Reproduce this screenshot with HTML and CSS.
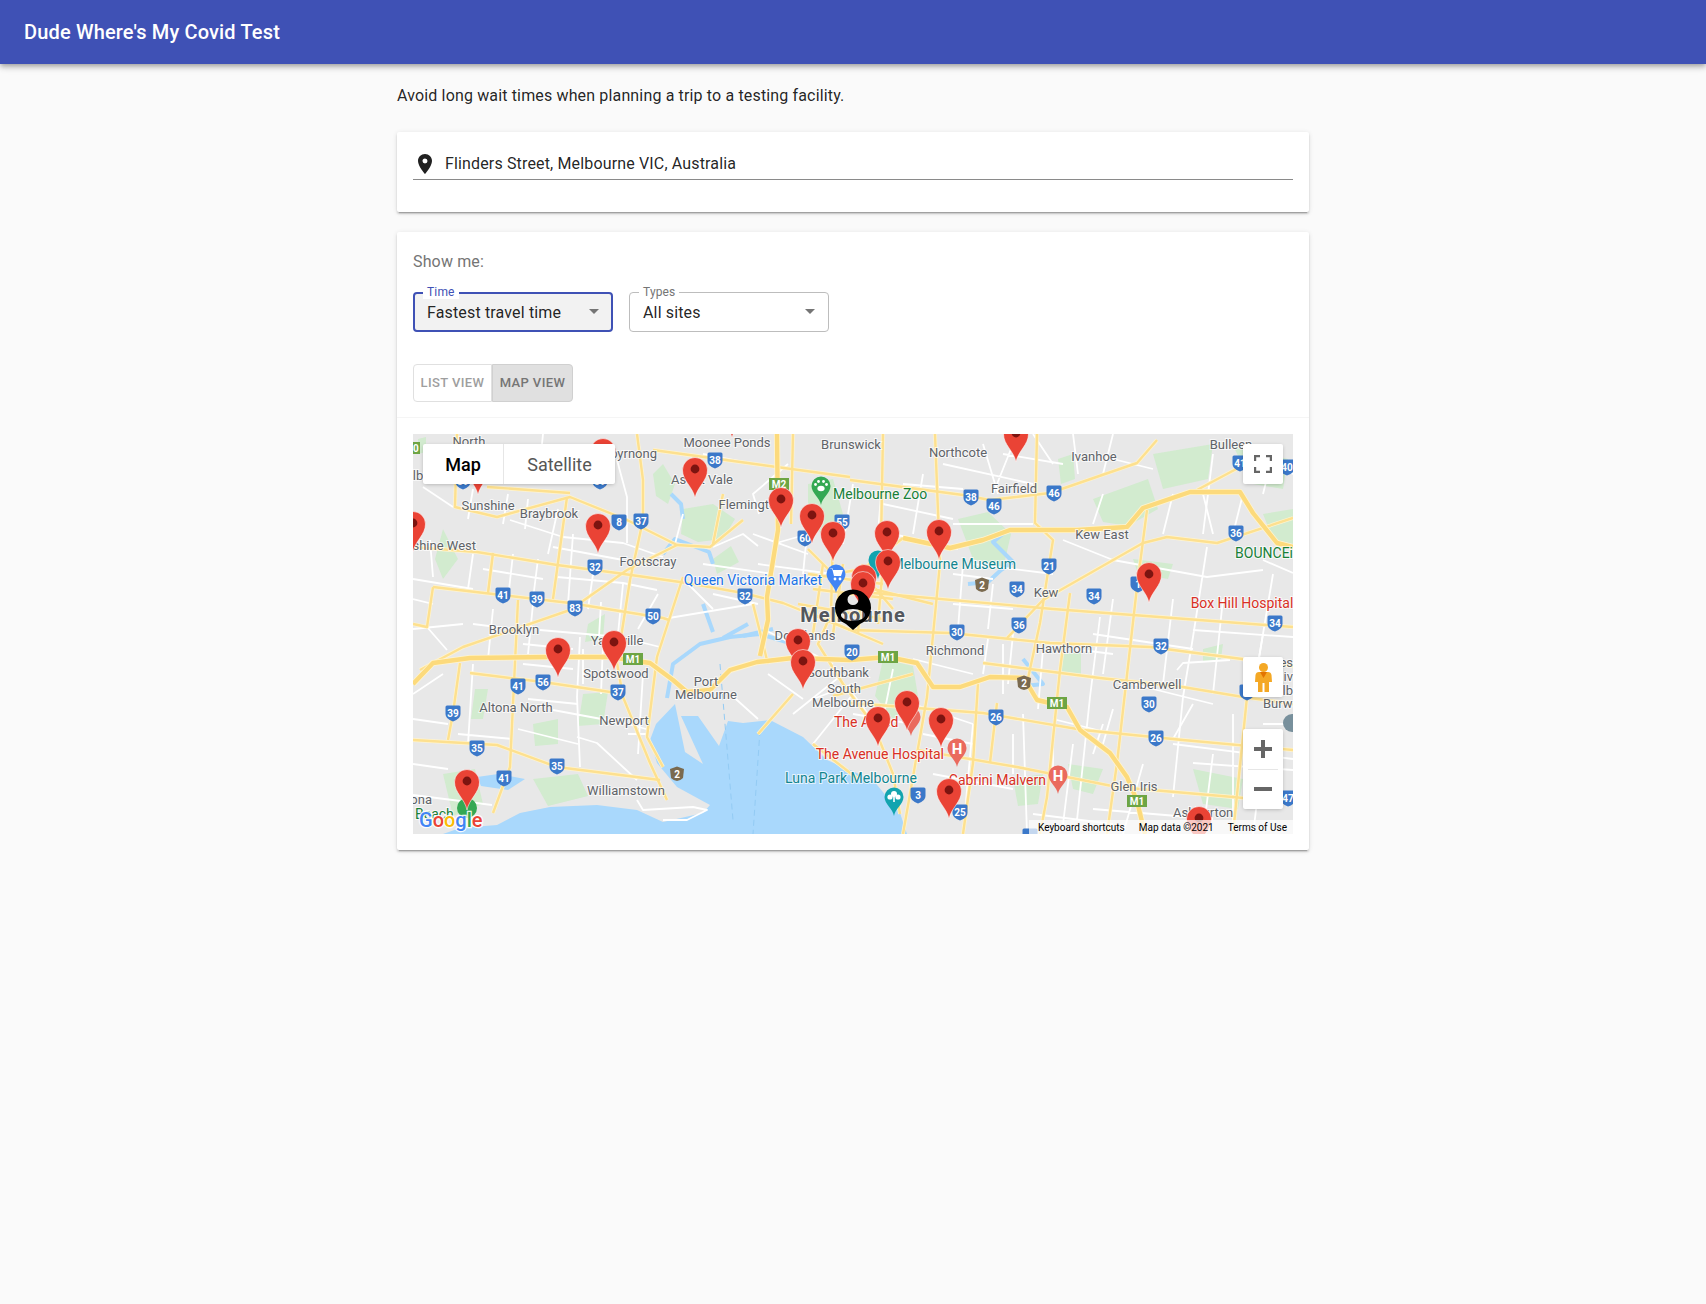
FILE: index.html
```html
<!DOCTYPE html>
<html lang="en">
<head>
  <meta charset="UTF-8" />
  <title>Dude Where's My Covid Test</title>
  <meta name="viewport" content="width=device-width, initial-scale=1.0" />
  <link rel="stylesheet" href="styles.css">
</head>
<body>
  <header class="appbar">
    <h1>Dude Where's My Covid Test</h1>
  </header>

  <main class="container">
    <p class="intro">Avoid long wait times when planning a trip to a testing facility.</p>

    <section class="paper search">
      <div class="search-field">
        <svg class="search-icon" viewBox="0 0 24 24" width="24" height="24"><path d="M12 2C8.13 2 5 5.13 5 9c0 5.25 7 13 7 13s7-7.75 7-13c0-3.87-3.13-7-7-7zm0 9.5a2.5 2.5 0 0 1 0-5 2.5 2.5 0 0 1 0 5z"/></svg>
        <input type="text" value="Flinders Street, Melbourne VIC, Australia">
      </div>
    </section>

    <section class="paper results">
      <div class="filters">
        <div class="show-me">Show me:</div>
        <div class="selects">
          <div class="select focused">
            <span class="select-label">Time</span>
            <span class="select-value">Fastest travel time</span>
            <span class="select-arrow"></span>
          </div>
          <div class="select">
            <span class="select-label">Types</span>
            <span class="select-value">All sites</span>
            <span class="select-arrow"></span>
          </div>
        </div>
        <div class="toggle">
          <button>List view</button>
          <button class="on">Map view</button>
        </div>
      </div>

      <div class="map-wrap">
        <div class="map">
          <svg class="map-canvas" viewBox="0 0 880 400" width="880" height="400">
            <defs>
              <path id="shield" d="M-7.5 -6Q-7.5 -7.5 -6 -7.5H6Q7.5 -7.5 7.5 -6V1Q7.5 6 0 8.5Q-7.5 6 -7.5 1Z"/>
              <path id="brown" d="M-7 -5L0 -7.5L7 -5L6 4Q3 7 0 7Q-3 7 -6 4Z"/>
              <path id="marker" d="M0 0C-1 -7 -9.5 -12 -9.5 -19A9.5 9.5 0 1 1 9.5 -19C9.5 -12 1 -7 0 0Z"/>
              <g id="pin">
                <path class="pin-body" d="M0 0C-2 -11 -12.5 -17 -12.5 -28A12.5 12.5 0 1 1 12.5 -28C12.5 -17 2 -11 0 0Z"/>
                <circle class="pin-dot" cx="0" cy="-29" r="4.4"/>
              </g>
              <g id="mains">
                <path d="M0 113L64 118L144 131L204 139L274 149L330 159L370 169L437 196L537 199L637 209L737 213L837 226L880 232"/>
                <path d="M20 153L157 169L250 184L256 186"/>
                <path d="M437 159L460 159L640 175L880 193"/>
                <path d="M570 229L687 244L770 253L830 263L880 270"/>
                <path d="M437 269L570 279L670 296L770 306L880 316"/>
                <path d="M504 316L604 333L704 353L820 363L880 369"/>
                <path d="M594 204L630 166L730 109L754 103L804 109L880 84"/>
                <path d="M522 0L527 129L514 263L490 400"/>
                <path d="M624 0L622 89L640 106L627 189L614 249"/>
                <path d="M657 159L647 236L634 363L627 400"/>
                <path d="M734 76L724 153L704 329L694 400"/>
                <path d="M834 263L820 400"/>
                <path d="M744 6L724 29L637 59L577 66L550 61L437 46"/>
                <path d="M827 33L784 56"/>
                <path d="M44 0L42 73L84 83L157 63L214 86L264 111L297 113L330 86"/>
                <path d="M224 0L230 46L230 86L217 146L204 229L210 263L237 329L254 366"/>
                <path d="M154 63L144 136L140 165"/>
                <path d="M105 166L97 333L80 379"/>
                <path d="M80 119L75 159"/>
                <path d="M7 236L50 213L157 176L214 136L264 111"/>
                <path d="M0 306L84 311L144 333L247 346"/>
                <path d="M57 239L130 248L204 259"/>
                <path d="M47 229L40 279L35 306"/>
                <path d="M270 143L244 223L234 303L250 333"/>
                <path d="M240 16L437 43"/>
                <path d="M74 53L157 59"/>
                <path d="M20 153L14 193L0 190"/>
                <path d="M380 0L378 90M420 100L418 180L405 210L430 250L460 290L480 340L487 380"/>
                <path d="M395 115L420 140L450 135L490 104M380 260L345 300"/>
                <path d="M440 150L520 170M450 140L480 175M400 180L470 210M470 0L468 110M565 249L560 329L550 400M584 269L577 329"/>
                <path d="M395 140L470 150M400 155L480 165M385 170L470 185M410 130L400 200M430 130L420 200M450 130L445 200M470 130L465 190"/>
                <path d="M420 262L500 240M400 310L445 345M340 170L355 230M310 60L300 110"/>
              </g>
            </defs>

            <!-- land cover -->
            <rect class="land" width="880" height="400"/>
            <g class="park">
              <path d="M270 75L300 70L322 85L310 105L285 108L268 100Z"/>
              <path d="M250 30L262 50L255 70L243 62L240 40Z"/>
              <path d="M395 50L420 45L430 80L410 100L395 90Z"/>
              <path d="M300 125L318 112L326 128L304 140Z"/>
              <path d="M470 225L500 232L505 262L480 285L462 262Z"/>
              <path d="M545 85L575 78L598 100L590 135L560 125Z"/>
              <path d="M645 25L660 20L662 45L648 50Z"/>
              <path d="M680 65L735 45L745 75L715 92L690 88Z"/>
              <path d="M740 20L800 10L795 45L750 55Z"/>
              <path d="M820 12L875 25L870 55L840 50Z"/>
              <path d="M850 80L880 75L880 110L860 105Z"/>
              <path d="M170 260L195 258L190 290L165 292Z"/>
              <path d="M120 290L145 285L145 310L122 312Z"/>
              <path d="M120 345L165 340L175 362L135 372Z"/>
              <path d="M30 95L45 125L30 145L22 125Z"/>
              <path d="M62 255L75 255L70 285L58 285Z"/>
              <path d="M175 190L192 180L190 205L172 208Z"/>
              <path d="M30 340L62 335L70 370L40 382Z"/>
              <path d="M650 220L668 218L668 240L648 238Z"/>
              <path d="M720 125L760 130L755 145L725 140Z"/>
              <path d="M655 330L690 335L680 360L660 355Z"/>
              <path d="M600 345L630 340L625 370L605 372Z"/>
              <path d="M780 335L830 345L825 375L790 370Z"/>
              <path d="M790 215L810 210L808 225L790 228Z"/>
              <path d="M5 5L13 3L13 18L5 20Z"/>
            </g>

            <!-- water -->
            <path class="water" d="M494 400L487 379L474 363L460 346L437 336L414 326L390 303L357 286L330 289L315 287L306 312L285 282L268 282L290 330L272 318L262 270L243 290L237 306L244 329L264 353L297 371L290 379L250 388L224 376L184 371L137 373L107 379L84 391L47 394L30 400Z"/>
            <path class="water" d="M64 343L85 340L112 345L95 356L68 352Z"/>
            <g class="river">
              <path d="M254 264L260 230L287 210L317 203L347 200L380 210L398 206"/>
              <path d="M290 170L300 198"/>
              <path d="M335 190L310 204"/>
              <path d="M360 195L330 202"/>
              <path d="M250 120L262 105L296 118L300 130"/>
              <path d="M258 60L268 70L270 85"/>
              <path d="M555 150L575 148L588 136L600 128L580 108L592 98"/>
              <path d="M610 225L630 250L612 252"/>
            </g>
            <path class="ferry" d="M347 296L340 400M307 230L320 386"/>

            <!-- minor roads -->
            <path class="road-minor" d="M10 53L40 73M97 86L150 103L210 109L250 123M144 143L210 149L244 156M140 113L210 126M127 196L207 203L247 213M167 203L164 263L167 333M140 276L210 289L237 296M164 303L184 309L224 346M17 106L20 143M14 193L34 216M224 366L230 376L280 373L294 376L274 386L250 386M0 361L79 371M204 26L214 63L214 109M794 113L780 203L770 263L760 363M850 126L880 139M650 106L700 126L794 143L850 136M780 196L880 203M764 236L770 229L817 226M687 183L677 263L664 386M614 400L610 280M780 329L880 336M270 80L262 110M300 113L330 100L345 112M346 80L340 60L375 30M130 0L125 50M60 55L55 85M95 60L90 90M115 65L112 95M145 75L135 120M60 120L55 155M0 195L50 190M0 260L30 240M188 168L186 203M210 150L205 200M245 160L225 195M380 280L430 240M400 310L440 260L470 300M440 280L500 290M500 225L560 240M540 140L580 145M540 170L600 175M590 210L590 260M680 200L780 215M640 290L640 350M690 290L680 320M840 20L880 40M800 20L790 100M700 25L740 35M620 0L640 30M570 10L585 60M510 40L500 100M470 35L465 100M440 50L430 110M395 90L390 140M340 100L395 120M345 130L420 140M560 290L550 400M520 340L600 355M620 380L700 390M720 250L800 270M820 280L820 400M850 290L880 290M860 140L840 260M600 300L600 340"/>
            <path class="road-minor" d="M0 145L60 155M0 165L20 170M60 190L100 195M0 285L35 290M0 330L35 335M45 300L100 305M110 210L160 215M110 230L160 235M115 265L165 270M105 295L165 310M170 215L170 250M190 210L188 260M230 240L225 320M215 300L235 300M120 170L115 220M80 175L75 225M60 230L55 310M70 135L130 145M100 120L95 165M125 125L120 165M160 100L155 170M180 140L175 175M275 150L300 175M300 160L345 170M250 185L340 170M315 258L345 285M355 240L390 265M400 265L440 250M480 235L470 285M500 270L560 290M510 300L560 310M550 130L545 195M580 150L575 195M575 205L570 240M600 200L595 250M630 215L625 275M660 215L700 220M700 165L690 240M640 285L700 300M700 275L690 310M760 165L750 250M810 165L800 260M850 200L840 260M780 270L760 305M660 310L650 390M730 330L710 400M680 375L800 385M760 310L880 325M800 320L790 400M850 320L840 400M690 60L680 90M760 60L750 100M790 60L800 100M830 60L820 100M860 20L850 60M700 0L690 40M660 0L665 40M590 20L650 30M530 30L620 50M490 50L550 55M470 70L540 85M540 90L620 90M480 100L545 115M560 130L640 140M600 10L580 60M360 110L395 100M290 20L340 30M290 130L360 140M350 195L420 230"/>

            <!-- main roads -->
            <use class="road-casing" href="#mains"/>
            <use class="road-main" href="#mains"/>
            <path class="freeway-casing" d="M0 250L20 229L57 224L137 223L197 223L237 229L260 246L274 258L297 256L317 236L344 228L380 224L437 226L475 223L504 229L520 253L547 253L577 243L611 244L624 266L654 273L667 296L697 319L714 343L724 367L732 400M364 0L365 96L354 163L355 186L347 222M490 104L537 114L570 106L597 96L664 96L714 93L730 74L777 58L827 58L840 79L864 109L880 113"/>
            <path class="road-freeway" d="M0 250L20 229L57 224L137 223L197 223L237 229L260 246L274 258L297 256L317 236L344 228L380 224L437 226L475 223L504 229L520 253L547 253L577 243L611 244L624 266L654 273L667 296L697 319L714 343L724 367L732 400M364 0L365 96L354 163L355 186L347 222M490 104L537 114L570 106L597 96L664 96L714 93L730 74L777 58L827 58L840 79L864 109L880 113"/>

            <!-- place names -->
            <g class="labels">
              <text x="56" y="12">North</text>
              <text x="5" y="46">lb</text>
              <text x="244" y="24" text-anchor="end">Maribyrnong</text>
              <text x="314" y="13">Moonee Ponds</text>
              <text x="438" y="15">Brunswick</text>
              <text x="289" y="50">Ascot Vale</text>
              <text x="75" y="76">Sunshine</text>
              <text x="136" y="84">Braybrook</text>
              <text x="338" y="75">Flemington</text>
              <text x="63" y="116" text-anchor="end">Sunshine West</text>
              <text x="235" y="132">Footscray</text>
              <text x="101" y="200">Brooklyn</text>
              <text x="204" y="211">Yarraville</text>
              <text x="392" y="206">Docklands</text>
              <text x="425" y="243">Southbank</text>
              <text x="431" y="259">South</text>
              <text x="430" y="273">Melbourne</text>
              <text x="203" y="244">Spotswood</text>
              <text x="293" y="252">Port</text>
              <text x="293" y="265">Melbourne</text>
              <text x="103" y="278">Altona North</text>
              <text x="211" y="291">Newport</text>
              <text x="213" y="361">Williamstown</text>
              <text x="19" y="370" text-anchor="end">Altona</text>
              <text x="545" y="23">Northcote</text>
              <text x="681" y="27">Ivanhoe</text>
              <text x="818" y="15">Bulleen</text>
              <text x="601" y="59">Fairfield</text>
              <text x="689" y="105">Kew East</text>
              <text x="633" y="163">Kew</text>
              <text x="542" y="221">Richmond</text>
              <text x="651" y="219">Hawthorn</text>
              <text x="734" y="255">Camberwell</text>
              <text x="850" y="274" text-anchor="start">Burwood</text>
              <text x="721" y="357">Glen Iris</text>
              <text x="760" y="383" text-anchor="start">Ashburton</text>
              <text x="880" y="233" text-anchor="end">es</text>
              <text x="880" y="247" text-anchor="end">iv</text>
              <text x="880" y="261" text-anchor="end">lb</text>
              <text class="city" x="440" y="188">Melbourne</text>
              <text class="blue" x="340" y="151">Queen Victoria Market</text>
              <text class="green" x="420" y="65" text-anchor="start">Melbourne Zoo</text>
              <text class="green" x="880" y="124" text-anchor="end">BOUNCEi</text>
              <text class="green" x="2" y="385" text-anchor="start">Beach</text>
              <text class="teal" x="603" y="135" text-anchor="end">Melbourne Museum</text>
              <text class="teal" x="504" y="349" text-anchor="end">Luna Park Melbourne</text>
              <text class="red" x="829" y="174">Box Hill Hospital</text>
              <text class="red" x="421" y="293" text-anchor="start">The Alfred</text>
              <text class="red" x="531" y="325" text-anchor="end">The Avenue Hospital</text>
              <text class="red" x="633" y="351" text-anchor="end">Cabrini Malvern</text>
            </g>

            <!-- route shields -->
            <g class="shields">
              <use href="#shield" x="302" y="26"/><text x="302" y="29.5">38</text>
              <use href="#shield" x="392" y="104"/><text x="392" y="107.5">60</text>
              <use href="#shield" x="429" y="88"/><text x="429" y="91.5">55</text>
              <use href="#shield" x="206" y="88"/><text x="206" y="91.5">8</text>
              <use href="#shield" x="228" y="87"/><text x="228" y="90.5">37</text>
              <use href="#shield" x="182" y="133"/><text x="182" y="136.5">32</text>
              <use href="#shield" x="332" y="162"/><text x="332" y="165.5">32</text>
              <use href="#shield" x="90" y="161"/><text x="90" y="164.5">41</text>
              <use href="#shield" x="124" y="165"/><text x="124" y="168.5">39</text>
              <use href="#shield" x="162" y="174"/><text x="162" y="177.5">83</text>
              <use href="#shield" x="240" y="182"/><text x="240" y="185.5">50</text>
              <use href="#shield" x="130" y="248"/><text x="130" y="251.5">56</text>
              <use href="#shield" x="105" y="252"/><text x="105" y="255.5">41</text>
              <use href="#shield" x="205" y="258"/><text x="205" y="261.5">37</text>
              <use href="#shield" x="40" y="279"/><text x="40" y="282.5">39</text>
              <use href="#shield" x="64" y="314"/><text x="64" y="317.5">35</text>
              <use href="#shield" x="144" y="332"/><text x="144" y="335.5">35</text>
              <use href="#shield" x="91" y="344"/><text x="91" y="347.5">41</text>
              <use href="#shield" x="187" y="47"/><text x="187" y="50.5">39</text>
              <use href="#shield" x="50" y="47"/><text x="50" y="50.5">39</text>
              <use href="#shield" x="558" y="63"/><text x="558" y="66.5">38</text>
              <use href="#shield" x="581" y="72"/><text x="581" y="75.5">46</text>
              <use href="#shield" x="641" y="59"/><text x="641" y="62.5">46</text>
              <use href="#shield" x="827" y="29"/><text x="827" y="32.5">41</text>
              <use href="#shield" x="874" y="33"/><text x="874" y="36.5">40</text>
              <use href="#shield" x="823" y="99"/><text x="823" y="102.5">36</text>
              <use href="#shield" x="636" y="132"/><text x="636" y="135.5">21</text>
              <use href="#shield" x="604" y="155"/><text x="604" y="158.5">34</text>
              <use href="#shield" x="681" y="162"/><text x="681" y="165.5">34</text>
              <use href="#shield" x="862" y="189"/><text x="862" y="192.5">34</text>
              <use href="#shield" x="606" y="191"/><text x="606" y="194.5">36</text>
              <use href="#shield" x="544" y="198"/><text x="544" y="201.5">30</text>
              <use href="#shield" x="748" y="212"/><text x="748" y="215.5">32</text>
              <use href="#shield" x="439" y="218"/><text x="439" y="221.5">20</text>
              <use href="#shield" x="736" y="270"/><text x="736" y="273.5">30</text>
              <use href="#shield" x="583" y="283"/><text x="583" y="286.5">26</text>
              <use href="#shield" x="743" y="304"/><text x="743" y="307.5">26</text>
              <use href="#shield" x="505" y="361"/><text x="505" y="364.5">3</text>
              <use href="#shield" x="547" y="378"/><text x="547" y="381.5">25</text>
              <use href="#shield" x="875" y="364"/><text x="875" y="367.5">47</text>
              <use href="#shield" x="725" y="150"/><text x="725" y="153.5">1</text>
              <use href="#shield" x="834" y="258"/>
              <use href="#shield" x="617" y="402"/>
            </g>
            <g class="motorways">
              <rect x="-6" y="8" width="13" height="12"/><text x="0" y="17.5">40</text>
              <rect x="356" y="44" width="20" height="12"/><text x="366" y="53.5">M2</text>
              <rect x="210" y="219" width="20" height="12"/><text x="220" y="228.5">M1</text>
              <rect x="465" y="217" width="20" height="12"/><text x="475" y="226.5">M1</text>
              <rect x="634" y="263" width="20" height="12"/><text x="644" y="272.5">M1</text>
              <rect x="714" y="361" width="20" height="12"/><text x="724" y="370.5">M1</text>
            </g>
            <g class="brown-shields">
              <use href="#brown" x="264" y="340"/><text x="264" y="343.5">2</text>
              <use href="#brown" x="569" y="151"/><text x="569" y="154.5">2</text>
              <use href="#brown" x="611" y="249"/><text x="611" y="252.5">2</text>
            </g>

            <!-- poi markers -->
            <use class="mk-hospital" href="#marker" x="544" y="333"/><text class="mk-h" x="544" y="319.5">H</text>
            <use class="mk-hospital" href="#marker" x="645" y="360"/><text class="mk-h" x="645" y="346.5">H</text>
            <use class="mk-hospital" href="#marker" x="498" y="302"/>
            <use class="mk-teal" href="#marker" x="481" y="382"/>
            <g class="mk-hole">
              <circle cx="481" cy="360" r="3"/><circle cx="477" cy="363" r="2.6"/><circle cx="485" cy="363" r="2.6"/><rect x="480.2" y="362" width="1.6" height="6"/>
            </g>
            <use class="mk-teal" href="#marker" x="465" y="145"/>
            <use class="mk-green" href="#marker" x="408" y="71"/>
            <g class="mk-hole">
              <ellipse cx="408" cy="54.5" rx="3.6" ry="2.8"/><circle cx="402.5" cy="50.5" r="1.4"/><circle cx="405.5" cy="47.5" r="1.4"/><circle cx="410.5" cy="47.5" r="1.4"/><circle cx="413.5" cy="50.5" r="1.4"/>
            </g>
            <use class="mk-blue" href="#marker" x="423" y="159"/>
            <g class="mk-hole">
              <path d="M416 134H419L421 142H428L430 136H420V134.5Z"/><circle cx="422" cy="145" r="1.4"/><circle cx="427" cy="145" r="1.4"/>
            </g>
            <circle class="mk-green-dot" cx="54" cy="374" r="10"/>
            <circle class="mk-grey" cx="879" cy="289" r="9"/>

            <!-- test sites -->
            <use href="#pin" x="319" y="4"/>
            <use href="#pin" x="65" y="61"/>
            <use href="#pin" x="190" y="45"/>
            <use href="#pin" x="603" y="28"/>
            <use href="#pin" x="282" y="64"/>
            <use href="#pin" x="368" y="94"/>
            <use href="#pin" x="399" y="110"/>
            <use href="#pin" x="420" y="128"/>
            <use href="#pin" x="185" y="120"/>
            <use href="#pin" x="0" y="118"/>
            <use href="#pin" x="474" y="127"/>
            <use href="#pin" x="526" y="126"/>
            <use href="#pin" x="451" y="171"/>
            <use href="#pin" x="475" y="156"/>
            <use href="#pin" x="450" y="178"/>
            <use href="#pin" x="736" y="169"/>
            <use href="#pin" x="201" y="237"/>
            <use href="#pin" x="145" y="244"/>
            <use href="#pin" x="385" y="235"/>
            <use href="#pin" x="390" y="256"/>
            <use href="#pin" x="494" y="297"/>
            <use href="#pin" x="465" y="313"/>
            <use href="#pin" x="528" y="314"/>
            <use href="#pin" x="536" y="385"/>
            <use href="#pin" x="54" y="376"/>
            <use href="#pin" x="786" y="413"/>

            <!-- you are here, the holes show the map through -->
            <path class="me" fill-rule="evenodd" d="M440 196L433 190A18 18 0 1 1 447 190ZM440 160A5.5 5.5 0 1 0 440 171A5.5 5.5 0 1 0 440 160ZM428 181A12 6 0 0 0 452 181A12 6 0 0 0 428 181Z"/>

            <text class="google" x="6" y="393"><tspan class="g-blue">G</tspan><tspan class="g-red">o</tspan><tspan class="g-yellow">o</tspan><tspan class="g-blue">g</tspan><tspan class="g-green">l</tspan><tspan class="g-red">e</tspan></text>
          </svg>

          <div class="map-type">
            <span class="active">Map</span>
            <span>Satellite</span>
          </div>
          <div class="map-btn fullscreen">
            <svg viewBox="0 0 18 18" width="18" height="18"><path d="M1 6V1H6M12 1H17V6M17 12V17H12M6 17H1V12"/></svg>
          </div>
          <div class="map-btn pegman">
            <svg viewBox="0 0 17 29" width="17" height="29">
              <circle cx="8.5" cy="4.5" r="4.5" fill="#f4a825"/>
              <path d="M4 9H13Q16 9 16.5 12L17 19H14V29H9.5V20H7.5V29H3V19H0L.5 12Q1 9 4 9Z" fill="#f4a825"/>
              <path d="M5 9L8.5 15L12 9Z" fill="#e37400"/>
            </svg>
          </div>
          <div class="zoom-btns">
            <svg viewBox="0 0 40 40" width="40" height="40"><path d="M20 11V29M11 20H29"/></svg>
            <svg viewBox="0 0 40 40" width="40" height="40"><path d="M11 20H29"/></svg>
          </div>
          <div class="attribution">
            <span>Keyboard shortcuts</span>
            <span>Map data ©2021</span>
            <span>Terms of Use</span>
          </div>
        </div>
      </div>
    </section>
  </main>
</body>
</html>
```

FILE: styles.css
```css
* {
  box-sizing: border-box;
}

html, body {
  margin: 0;
  padding: 0;
}

body {
  font-family: Roboto, 'Liberation Sans', sans-serif;
  background: #fafafa;
  color: rgba(0,0,0,0.87);
  min-height: 1304px;
}

.appbar {
  height: 64px;
  padding: 0 24px;
  display: flex;
  align-items: center;
  background: #3f51b5;
  color: white;
  box-shadow: 0 2px 4px -1px rgba(0,0,0,0.2), 0 4px 5px 0 rgba(0,0,0,0.14), 0 1px 10px 0 rgba(0,0,0,0.12);
}

.appbar h1 {
  margin: 0;
  font-size: 20px;
  font-weight: 500;
  letter-spacing: 0.15px;
}

.container {
  width: 960px;
  margin: 0 auto;
  padding: 0 24px;
}

.intro {
  margin: 0;
  padding-top: 21px;
  height: 68px;
  font-size: 16px;
  line-height: 22px;
  letter-spacing: 0.15px;
}

.paper {
  background: white;
  border-radius: 2px;
  box-shadow: 0 3px 1px -2px rgba(0,0,0,0.2), 0 2px 2px 0 rgba(0,0,0,0.14), 0 1px 5px 0 rgba(0,0,0,0.12);
}

.search {
  height: 80px;
  padding: 16px;
}

.search-field {
  height: 32px;
  display: flex;
  align-items: center;
  border-bottom: 1px solid #8a8a8a;
}

.search-icon {
  flex: none;
  width: 24px;
  height: 24px;
  fill: #212121;
}

.search-field input {
  flex: 1;
  margin-left: 8px;
  border: none;
  outline: none;
  background: none;
  padding: 0;
  font-family: inherit;
  font-size: 16px;
  letter-spacing: 0.15px;
  color: rgba(0,0,0,0.87);
}

.results {
  margin-top: 20px;
  height: 618px;
}

.filters {
  height: 186px;
  padding: 19px 16px 0;
  border-bottom: 1px solid #f5f5f5;
}

.show-me {
  font-size: 16px;
  line-height: 22px;
  letter-spacing: 0.15px;
  color: #757575;
}

.selects {
  display: flex;
  gap: 16px;
  margin-top: 19px;
}

.select {
  position: relative;
  width: 200px;
  height: 40px;
  border: 1px solid #bdbdbd;
  border-radius: 4px;
  display: flex;
  align-items: center;
  padding: 0 13px;
  font-size: 16px;
  letter-spacing: 0.15px;
}

.select.focused {
  border: 2px solid #3f51b5;
  background: #f2f2f2;
  padding: 0 12px;
}

.select-label {
  position: absolute;
  top: -7px;
  left: 9px;
  padding: 0 4px;
  background: white;
  font-size: 12px;
  line-height: 13px;
  color: #757575;
}

.focused .select-label {
  top: -8px;
  left: 8px;
  color: #3f51b5;
}

.select-arrow {
  position: absolute;
  right: 13px;
  top: 16px;
  border-left: 5px solid transparent;
  border-right: 5px solid transparent;
  border-top: 5px solid #757575;
}

.focused .select-arrow {
  right: 12px;
  top: 15px;
}

.toggle {
  display: flex;
  margin-top: 32px;
  width: 160px;
  height: 38px;
}

.toggle button {
  border: 1px solid #e0e0e0;
  background: white;
  color: #9e9e9e;
  font-family: inherit;
  font-size: 13px;
  font-weight: 500;
  letter-spacing: 0.4px;
  text-transform: uppercase;
  padding: 0 0 2px;
  width: 79px;
  border-radius: 4px 0 0 4px;
}

.toggle button.on {
  width: 81px;
  background: #e0e0e0;
  color: #757575;
  border-color: #d0d0d0;
  border-radius: 0 4px 4px 0;
}

.map-wrap {
  padding: 16px;
}

.map {
  position: relative;
  width: 880px;
  height: 400px;
  overflow: hidden;
}

.map-canvas {
  display: block;
}

.land { fill: #e8e8e8; }
.park { fill: #d2ebcf; }
.water { fill: #a9d8fc; }

.river {
  fill: none;
  stroke: #a9d8fc;
  stroke-width: 4;
  stroke-linejoin: round;
}

.ferry {
  fill: none;
  stroke: #93cbf4;
  stroke-width: 1;
  stroke-dasharray: 6 4;
}

.road-minor {
  fill: none;
  stroke: white;
  stroke-width: 1.8;
  stroke-linejoin: round;
}

.road-casing {
  fill: none;
  stroke: #fff4cf;
  stroke-width: 3.8;
  stroke-linejoin: round;
}

.road-main {
  fill: none;
  stroke: #fde08f;
  stroke-width: 2.4;
  stroke-linejoin: round;
}

.freeway-casing {
  fill: none;
  stroke: #fff4cf;
  stroke-width: 6;
  stroke-linejoin: round;
}

.road-freeway {
  fill: none;
  stroke: #fcda7c;
  stroke-width: 4.4;
  stroke-linejoin: round;
}

.labels text {
  font-family: Roboto, sans-serif;
  font-size: 13px;
  fill: #5f6368;
  text-anchor: middle;
  stroke: rgba(255,255,255,0.7);
  stroke-width: 2px;
  paint-order: stroke;
}

.labels text[text-anchor="start"] { text-anchor: start; }
.labels text[text-anchor="end"] { text-anchor: end; }

.labels .city {
  font-size: 20px;
  font-weight: 700;
  letter-spacing: 1px;
  fill: #53575e;
}

.labels .blue, .labels .green, .labels .teal, .labels .red {
  font-size: 14px;
}

.labels .blue { fill: #1a73e8; }
.labels .green { fill: #188038; }
.labels .teal { fill: #12858f; }
.labels .red { fill: #d93025; }

.shields use { fill: #3b78c9; }

.shields text, .motorways text, .brown-shields text {
  font-family: Roboto, sans-serif;
  font-size: 10px;
  font-weight: 700;
  fill: white;
  text-anchor: middle;
}

.motorways rect { fill: #6da544; }

.brown-shields use { fill: #7a6a4f; }

.mk-hospital { fill: #ea6a5e; }
.mk-teal { fill: #12a4af; }
.mk-green { fill: #34a853; }
.mk-blue { fill: #4285f4; }
.mk-hole { fill: white; }
.mk-green-dot { fill: #34a853; }
.mk-grey { fill: #78909c; }

.mk-h {
  font-family: Roboto, sans-serif;
  font-size: 15px;
  font-weight: 700;
  fill: white;
  text-anchor: middle;
}

.pin-body {
  fill: #ea4335;
  stroke: #fff;
  stroke-width: 0.8;
  stroke-opacity: 0.7;
}

.pin-dot { fill: #7c1410; }

.me { fill: black; }

.google {
  font-family: Roboto, sans-serif;
  font-size: 20px;
  font-weight: 500;
  stroke: rgba(255,255,255,0.9);
  stroke-width: 2.5px;
  paint-order: stroke;
}

.g-blue { fill: #4285f4; }
.g-red { fill: #ea4335; }
.g-yellow { fill: #fbbc05; }
.g-green { fill: #34a853; }

.map-type {
  position: absolute;
  top: 10px;
  left: 10px;
  width: 192px;
  height: 40px;
  display: flex;
  background: white;
  border-radius: 2px;
  box-shadow: 0 1px 4px -1px rgba(0,0,0,0.3);
  font-size: 18px;
  color: #565656;
}

.map-type span {
  display: flex;
  align-items: center;
  justify-content: center;
  flex: 1;
}

.map-type .active {
  flex: none;
  width: 81px;
  color: black;
  font-weight: 500;
  border-right: 1px solid #e6e6e6;
}

.map-btn {
  position: absolute;
  left: 830px;
  width: 40px;
  height: 40px;
  background: white;
  border-radius: 2px;
  box-shadow: 0 1px 4px -1px rgba(0,0,0,0.3);
  display: flex;
  align-items: center;
  justify-content: center;
}

.fullscreen { top: 10px; }
.pegman { top: 223px; }

.fullscreen path {
  fill: none;
  stroke: #666;
  stroke-width: 2.4;
}

.zoom-btns {
  position: absolute;
  left: 830px;
  top: 295px;
  width: 40px;
  height: 80px;
  background: white;
  border-radius: 2px;
  box-shadow: 0 1px 4px -1px rgba(0,0,0,0.3);
}

.zoom-btns svg {
  display: block;
}

.zoom-btns svg + svg {
  background: linear-gradient(#e6e6e6, #e6e6e6) no-repeat center top / 30px 1px;
}

.zoom-btns path {
  fill: none;
  stroke: #666;
  stroke-width: 4;
}

.attribution {
  position: absolute;
  right: 0;
  bottom: 0;
  width: 264px;
  height: 14px;
  display: flex;
  align-items: center;
  justify-content: space-between;
  padding: 0 6px 0 9px;
  background: rgba(255,255,255,0.7);
  font-size: 10px;
  color: black;
  white-space: nowrap;
}
```
